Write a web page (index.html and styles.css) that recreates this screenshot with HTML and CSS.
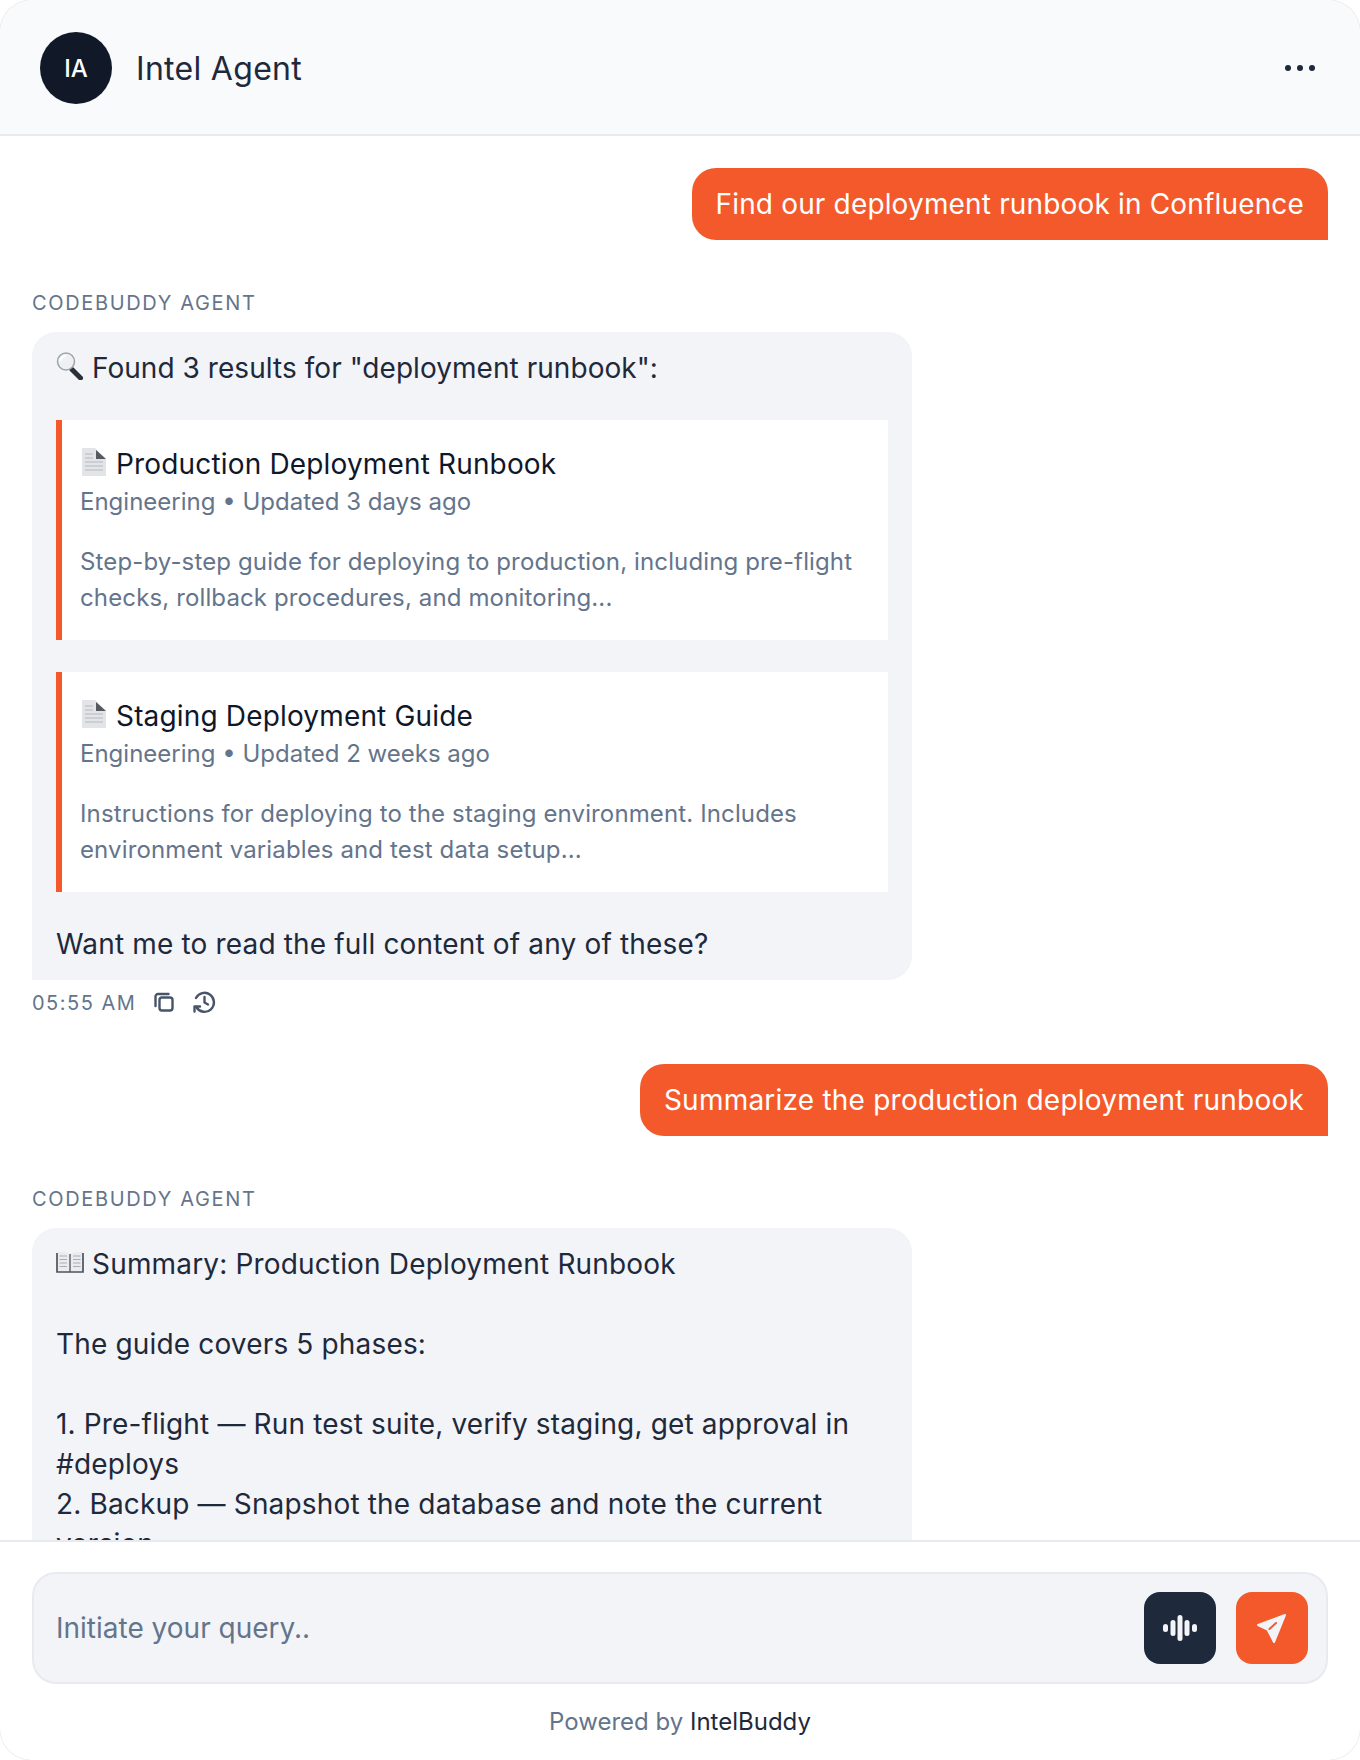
FILE: index.html
```html
<!DOCTYPE html>
<html lang="en">
<head>
    <meta charset="UTF-8">
    <title>Intel Agent</title>
    <link rel="stylesheet" href="styles.css">
</head>
<body>
    <svg class="defs" width="0" height="0">
        <symbol id="emoji-search" viewBox="0 0 28 28">
            <path d="M16 17.500 L24.500 26" stroke="#2b3038" stroke-width="5" stroke-linecap="round"/>
            <circle cx="10" cy="9.500" r="8.500" fill="#eef1f4" stroke="#9ea4ab" stroke-width="1.500"/>
            <path d="M4.500 9 A6 6 0 0 1 10 4" fill="none" stroke="#fff" stroke-width="2"/>
        </symbol>
        <symbol id="emoji-doc" viewBox="0 0 28 28">
            <path d="M2 0 H15 L26 11 V28 H2 Z" fill="#e2e4e8"/>
            <path d="M16 2 L26 11 H16 Z" fill="#56595f"/>
            <path d="M5 6 H13 M5 10 H13 M5 14 H23 M5 18 H23 M5 22 H23" stroke="#c3c6cc" stroke-width="1.500"/>
        </symbol>
        <symbol id="emoji-book" viewBox="0 0 28 28">
            <path d="M1 4 Q8 3 14 6 Q20 3 27 4 V23 H1 Z" fill="#e9ebef"/>
            <path d="M3.500 8 H11 M3.500 11.500 H11 M3.500 15 H11 M3.500 18.500 H11 M17 8 H24.500 M17 11.500 H24.500 M17 15 H24.500 M17 18.500 H24.500" stroke="#a9adb5" stroke-width="1.200"/>
            <path d="M14 6 V24" stroke="#5f6670" stroke-width="1.500"/>
            <path d="M1 5 V24 H27 V5" fill="none" stroke="#4c535e" stroke-width="1.700"/>
        </symbol>
    </svg>

    <div class="chat">
        <header class="chat-header">
            <div class="avatar">IA</div>
            <div class="agent-name">Intel Agent</div>
            <svg class="more" width="32" height="12" viewBox="0 0 32 12"><circle cx="4" cy="6" r="3"/><circle cx="16" cy="6" r="3"/><circle cx="28" cy="6" r="3"/></svg>
        </header>

        <div class="messages">
            <div class="user-msg">Find our deployment runbook in Confluence</div>

            <div class="agent-label">CODEBUDDY AGENT</div>
            <div class="agent-msg">
                <div class="intro"><svg class="emoji"><use href="#emoji-search"/></svg> Found 3 results for "deployment runbook":</div>
                <div class="result">
                    <div class="result-title"><svg class="emoji"><use href="#emoji-doc"/></svg> Production Deployment Runbook</div>
                    <div class="result-meta">Engineering • Updated 3 days ago</div>
                    <div class="result-desc">Step-by-step guide for deploying to production, including pre-flight checks, rollback procedures, and monitoring...</div>
                </div>
                <div class="result">
                    <div class="result-title"><svg class="emoji"><use href="#emoji-doc"/></svg> Staging Deployment Guide</div>
                    <div class="result-meta">Engineering • Updated 2 weeks ago</div>
                    <div class="result-desc">Instructions for deploying to the staging environment. Includes environment variables and test data setup...</div>
                </div>
                <div>Want me to read the full content of any of these?</div>
            </div>
            <div class="msg-footer">
                <span class="msg-time">05:55 AM</span>
                <svg class="msg-icon" width="20" height="20" viewBox="0 0 20 20"><rect x="5.500" y="5.500" width="13" height="13" rx="2.500"/><path d="M14.500 2 H4 a2.500 2.500 0 0 0 -2.500 2.500 V14"/></svg>
                <svg class="msg-icon" width="24" height="24" viewBox="0 0 24 24"><path d="M4 8 A9.500 9.500 0 1 1 4.500 17.500"/><path d="M2.500 21.500 V16.500 H8"/><path d="M12.500 7 V12.500 L16 14.500"/></svg>
            </div>

            <div class="user-msg second">Summarize the production deployment runbook</div>

            <div class="agent-label">CODEBUDDY AGENT</div>
            <div class="agent-msg summary"><svg class="emoji"><use href="#emoji-book"/></svg> Summary: Production Deployment Runbook

The guide covers 5 phases:

1. Pre-flight — Run test suite, verify staging, get approval in #deploys
2. Backup — Snapshot the database and note the current version</div>
        </div>

        <footer class="chat-footer">
            <div class="input-box">
                <input class="query" type="text" placeholder="Initiate your query..">
                <button class="icon-btn voice">
                    <svg width="36" height="28" viewBox="0 0 36 28"><rect x="1" y="10" width="5" height="8" rx="2.500"/><rect x="8.500" y="6" width="5" height="16" rx="2.500"/><rect x="15.500" y="1" width="5" height="26" rx="2.500"/><rect x="22.500" y="6" width="5" height="16" rx="2.500"/><rect x="30" y="10" width="5" height="8" rx="2.500"/></svg>
                </button>
                <button class="icon-btn send">
                    <svg width="32" height="32" viewBox="0 0 32 32"><path class="plane" d="M29 3 L2 13 L11.500 17.500 L18 30 Z"/><path class="slit" d="M13.500 17 L20 11"/></svg>
                </button>
            </div>
            <div class="powered">Powered by <span class="brand">IntelBuddy</span></div>
        </footer>
    </div>
</body>
</html>
```

FILE: styles.css
```css
* {
    box-sizing: border-box;
}
html, body {
    height: 1760px;
    overflow: hidden;
}
body {
    margin: 0;
    background-color: #fff;
    font-family: Inter, "Noto Sans", sans-serif;
    color: #1e293b;
}
.defs {
    display: block;
    height: 0;
}
.emoji {
    width: 28px;
    height: 28px;
    vertical-align: -2px;
}
.chat {
    width: 1360px;
    height: 1760px;
    display: flex;
    flex-direction: column;
    background-color: #fff;
    border-radius: 32px;
    overflow: hidden;
    box-shadow: 0 0 1px rgba(0, 0, 0, 0.4);
}
.chat-header {
    height: 136px;
    flex-shrink: 0;
    display: flex;
    align-items: center;
    padding: 2px 44px 0 40px;
    background-color: #f9fafc;
    border-bottom: 2px solid #e9eaf0;
}
.avatar {
    width: 72px;
    height: 72px;
    border-radius: 50%;
    background-color: #111827;
    color: #fff;
    font-size: 24px;
    font-weight: 500;
    display: flex;
    align-items: center;
    justify-content: center;
}
.agent-name {
    margin-left: 24px;
    padding-top: 2px;
    font-size: 32px;
    line-height: 44px;
    letter-spacing: 0.3px;
    flex: 1;
}
.more {
    fill: #1e293b;
}
.messages {
    flex: 1;
    min-height: 0;
    overflow: hidden;
    display: flex;
    flex-direction: column;
    padding: 32px 32px 0;
    font-size: 28px;
    line-height: 40px;
    letter-spacing: 0.16px;
}
.user-msg {
    align-self: flex-end;
    flex-shrink: 0;
    padding: 16px 24px;
    background-color: #f4592b;
    color: #fff;
    border-radius: 24px 24px 0 24px;
}
.user-msg.second {
    margin-top: 48px;
    letter-spacing: 0.22px;
}
.agent-label {
    margin-top: 49px;
    margin-bottom: 15px;
    font-size: 20px;
    line-height: 28px;
    letter-spacing: 1.65px;
    color: #64748b;
}
.agent-msg {
    width: 880px;
    flex-shrink: 0;
    padding: 16px 24px;
    background-color: #f2f4f8;
    border-radius: 24px 24px 24px 0;
}
.intro {
    letter-spacing: 0.05px;
}
.summary {
    white-space: pre-wrap;
}
.result {
    margin: 32px 0;
    padding: 24px 18px;
    background-color: #fff;
    border-left: 6px solid #f4592b;
}
.result-title {
    color: #0f172a;
}
.result-meta {
    font-size: 24px;
    line-height: 36px;
    letter-spacing: 0;
    color: #64748b;
}
.result-desc {
    margin-top: 24px;
    font-size: 24px;
    line-height: 36px;
    letter-spacing: 0.13px;
    color: #64748b;
}
.msg-footer {
    margin-top: 8px;
    height: 28px;
    display: flex;
    align-items: center;
    gap: 18px;
}
.msg-time {
    padding-top: 2px;
    font-size: 20px;
    letter-spacing: 1.5px;
    color: #64748b;
}
.msg-icon {
    fill: none;
    stroke: #475569;
    stroke-width: 2.400;
    stroke-linecap: round;
    stroke-linejoin: round;
}
.chat-footer {
    height: 220px;
    flex-shrink: 0;
    padding: 30px 32px 0;
    background-color: #fff;
    border-top: 2px solid #e9eaf0;
}
.input-box {
    height: 112px;
    display: flex;
    align-items: center;
    gap: 20px;
    padding: 0 18px 0 22px;
    background-color: #f2f4f8;
    border: 2px solid #e9eaf0;
    border-radius: 24px;
}
.query {
    flex: 1;
    min-width: 0;
    border: none;
    outline: none;
    padding: 0;
    background: transparent;
    font-family: inherit;
    font-size: 28px;
    color: #1e293b;
}
.query::placeholder {
    color: #64748b;
}
.icon-btn {
    width: 72px;
    height: 72px;
    padding: 0;
    border: none;
    border-radius: 16px;
    display: flex;
    align-items: center;
    justify-content: center;
    cursor: pointer;
}
.voice {
    background-color: #1e293b;
    fill: #f2f4f8;
}
.send {
    background-color: #f4592b;
}
.plane {
    fill: #f2f4f8;
    stroke: #f2f4f8;
    stroke-width: 2;
    stroke-linejoin: round;
}
.slit {
    fill: none;
    stroke: #f4592b;
    stroke-width: 2;
    stroke-linecap: round;
}
.powered {
    margin-top: 20px;
    text-align: center;
    font-size: 24px;
    line-height: 36px;
    color: #64748b;
}
.brand {
    color: #1e293b;
}
```
